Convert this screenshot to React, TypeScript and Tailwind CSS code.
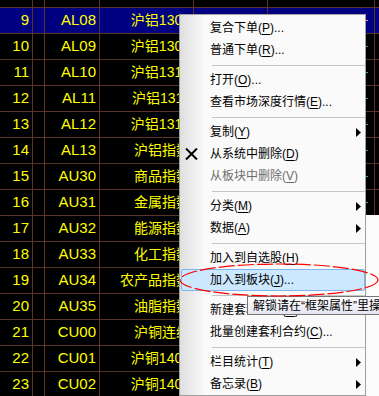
import clsx from "clsx";

type Row = { no: number; code: string; name: string; tick: string };

const ROWS: Row[] = [
  { no: 9, code: "AL08", name: "沪铝1308", tick: "bg-[#ff8a8a]" },
  { no: 10, code: "AL09", name: "沪铝1309", tick: "bg-[#4fb04f]" },
  { no: 11, code: "AL10", name: "沪铝1310", tick: "bg-[#4fb04f]" },
  { no: 12, code: "AL11", name: "沪铝1311", tick: "bg-[#4fb04f]" },
  { no: 13, code: "AL12", name: "沪铝1312", tick: "bg-[#4fb04f]" },
  { no: 14, code: "AL13", name: "沪铝指数", tick: "bg-[#4fb04f]" },
  { no: 15, code: "AU30", name: "商品指数", tick: "bg-[#4fb04f]" },
  { no: 16, code: "AU31", name: "金属指数", tick: "bg-[#4fb04f]" },
  { no: 17, code: "AU32", name: "能源指数", tick: "bg-[#4fb04f]" },
  { no: 18, code: "AU33", name: "化工指数", tick: "bg-[#4fb04f]" },
  { no: 19, code: "AU34", name: "农产品指数", tick: "bg-[#4fb04f]" },
  { no: 20, code: "AU35", name: "油脂指数", tick: "bg-[#4fb04f]" },
  { no: 21, code: "CU00", name: "沪铜连续", tick: "bg-[#4fb04f]" },
  { no: 22, code: "CU01", name: "沪铜1401", tick: "bg-[#4fb04f]" },
  { no: 23, code: "CU02", name: "沪铜1402", tick: "bg-[#4fb04f]" },
];

type MenuItem = {
  label: string;
  mnemonic: string;
  dots?: boolean;
  submenu?: boolean;
  disabled?: boolean;
  remove?: boolean;
  active?: boolean;
};

type MenuEntry = MenuItem | "sep";

const MENU: MenuEntry[] = [
  { label: "复合下单", mnemonic: "P", dots: true },
  { label: "普通下单", mnemonic: "R", dots: true },
  "sep",
  { label: "打开", mnemonic: "O", dots: true },
  { label: "查看市场深度行情", mnemonic: "E", dots: true },
  "sep",
  { label: "复制", mnemonic: "Y", submenu: true },
  { label: "从系统中删除", mnemonic: "D", remove: true },
  { label: "从板块中删除", mnemonic: "V", disabled: true },
  "sep",
  { label: "分类", mnemonic: "M", submenu: true },
  { label: "数据", mnemonic: "A", submenu: true },
  "sep",
  { label: "加入到自选股", mnemonic: "H" },
  { label: "加入到板块", mnemonic: "J", dots: true, active: true },
  "sep",
  { label: "新建套利合约", mnemonic: "N", dots: true },
  { label: "批量创建套利合约", mnemonic: "C", dots: true },
  "sep",
  { label: "栏目统计", mnemonic: "T", submenu: true },
  { label: "备忘录", mnemonic: "B", submenu: true },
];

const GRID = "grid h-[26px] grid-cols-[33px_12px_55px_94px_74px_107px_1fr] border-b border-[#5a3428]";
const CELL = "flex items-center justify-end border-r border-[#5a3428] pr-[3px]";

function QuoteTable() {
  return (
    <div className="font-['Liberation_Sans','Noto_Sans_CJK_SC',sans-serif] text-[#ffff00]">
      <div className="grid h-[8px] grid-cols-[33px_12px_55px_94px_74px_107px_1fr] border-b border-[#5a3428]">
        <div className="border-r border-[#5a3428]" />
        <div className="border-r border-[#5a3428]" />
        <div className="border-r border-[#5a3428]" />
        <div className="border-r border-[#5a3428]" />
        <div className="border-r border-[#5a3428]" />
        <div className="border-r border-[#5a3428]" />
        <div />
      </div>
      {ROWS.map((row) => (
        <div key={row.no} className={clsx(GRID, row.no === 9 ? "bg-[#000080]" : "bg-black")}>
          <div className={clsx(CELL, "text-[15px]")}>{row.no}</div>
          <div className={CELL} />
          <div className={clsx(CELL, "text-[15px]")}>{row.code}</div>
          <div className={clsx(CELL, "whitespace-nowrap text-[14px]")}>{row.name}</div>
          <div className={CELL} />
          <div className="flex items-center justify-end border-r border-[#5a3428] pr-[6px]">
            <span className={clsx("h-px w-[2px]", row.tick)} />
          </div>
          <div />
        </div>
      ))}
    </div>
  );
}

function RemoveIcon() {
  return (
    <svg width="13" height="12" viewBox="0 0 13 12" aria-hidden="true">
      <path d="M1 0.5 L12 11.5 M12 0.5 L1 11.5" stroke="#000" strokeWidth="2" />
    </svg>
  );
}

function SubmenuArrow() {
  return (
    <svg width="5" height="9" viewBox="0 0 5 9" aria-hidden="true">
      <polygon points="0,0 5,4.5 0,9" fill="#000" />
    </svg>
  );
}

function ContextMenu() {
  return (
    <div className="absolute left-[179px] top-[14px] w-[187px] border border-[#a0a0a0] bg-[linear-gradient(to_right,#dfdfdf,#fafafa_25px,#fafafa)] pt-[2px] font-['Liberation_Sans','Noto_Sans_CJK_SC',sans-serif] text-[12px]">
      {MENU.map((entry, i) =>
        entry === "sep" ? (
          <div key={i} className="flex h-[8px] items-center pl-[32px]">
            <div className="h-px flex-1 bg-[#c5c5c5]" />
          </div>
        ) : (
          <div
            key={i}
            className={clsx(
              "ml-[1px] flex h-[22px] items-center rounded-[2px] border",
              entry.active ? "border-[#7db7ec] bg-[#cce8ff]" : "border-transparent",
              entry.disabled ? "text-[#6d6d6d]" : "text-black"
            )}
          >
            <span className="flex w-[28px] shrink-0 items-center pl-[3px]">
              {entry.remove && <RemoveIcon />}
            </span>
            <span className="flex-1 whitespace-nowrap">
              {entry.label}(<span className="underline underline-offset-[2px]">{entry.mnemonic}</span>)
              {entry.dots ? "..." : ""}
            </span>
            <span className="flex w-[12px] shrink-0 items-center justify-end pr-[3px]">
              {entry.submenu && <SubmenuArrow />}
            </span>
          </div>
        )
      )}
    </div>
  );
}

export default function App() {
  return (
    <div className="relative h-[396px] w-[379px] overflow-hidden bg-black">
      <QuoteTable />
      <div className="absolute left-[366px] top-[215px] h-[181px] w-[13px] bg-[#fbfbfb]" />
      <ContextMenu />
      <div className="absolute left-[247px] top-[296px] flex h-[19px] items-center whitespace-nowrap border border-[#767676] bg-[linear-gradient(to_bottom,#ffffff,#e4e5f0)] pl-[5px] pr-[4px] font-['Liberation_Sans','Noto_Sans_CJK_SC',sans-serif] text-[12px] text-black">
        解锁请在“框架属性”里操作
      </div>
      <svg className="pointer-events-none absolute left-0 top-0" width="379" height="396" viewBox="0 0 379 396" aria-hidden="true">
        <ellipse cx="279" cy="280" rx="99" ry="16" fill="none" stroke="#ff0000" strokeWidth="1.2" strokeDasharray="16 3" />
      </svg>
    </div>
  );
}
